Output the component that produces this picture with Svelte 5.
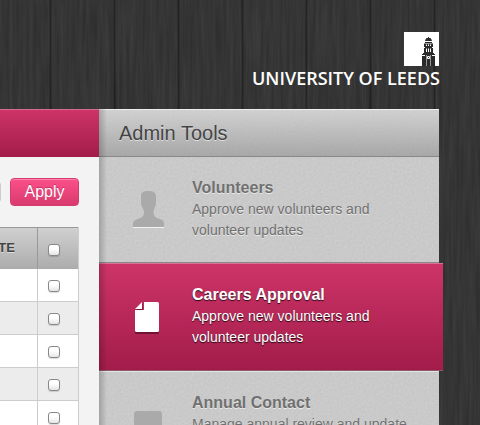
<script>
  const tools = [
    { title: 'Volunteers', lines: ['Approve new volunteers and', 'volunteer updates'], icon: 'person', active: false },
    { title: 'Careers Approval', lines: ['Approve new volunteers and', 'volunteer updates'], icon: 'page', active: true },
    { title: 'Annual Contact', lines: ['Manage annual review and update'], icon: 'card', active: false }
  ];
  const rows = [1, 2, 3, 4, 5];
</script>

<div class="page">
  <header class="masthead">
    <a class="brand" href="#home">
      <svg class="tower" width="35" height="34" viewBox="0 0 35 34" aria-hidden="true">
        <path fill="#fff" d="M0 0h35v34H0z" />
        <g fill="#2b2b2b">
          <path d="M24 5h1v1h1.500l1 1.500.5 1.500h-7l.5-1.500L22.500 6H24z" />
          <path d="M21 10h7v1h-7zM20 11.500h9V15h-9zM21 15h7v1h-7z" />
          <path d="M20 16h9v5h-9z" />
          <path d="M19 21h11v1h1v12h-4V23h-5v11h-4V22h1z" />
          <path d="M22.500 23h4v11h-4z" />
        </g>
        <g fill="#fff">
          <path d="M22 12.500h1V14h-1zM24 12.500h1V14h-1zM26 12.500h1V14h-1z" />
          <path d="M22 16.500h1V20h-1zM24 16.500h1V20h-1zM26 16.500h1V20h-1z" />
          <path d="M18 23h3v1h-3zM28 23h3v1h-3z" />
          <path d="M23.500 24h2l.5.7v1.600l-.5.700h-2l-.5-.7v-1.600z" />
        </g>
        <path fill="#2b2b2b" d="M24 25h1v1h-1z" />
      </svg>
      <span class="wordmark">UNIVERSITY OF LEEDS</span>
    </a>
  </header>

  <div class="body">
    <main class="content">
      <div class="banner"></div>
      <div class="toolbar">
        <select aria-label="Bulk action"><option>Bulk actions</option></select>
        <button type="button">Apply</button>
      </div>
      <div class="records">
        <table>
          <thead>
            <tr>
              <th>DATE</th>
              <th class="tick"><input type="checkbox" aria-label="Select all" /></th>
            </tr>
          </thead>
          <tbody>
            {#each rows as row}
              <tr>
                <td></td>
                <td class="tick"><input type="checkbox" aria-label="Select row {row}" /></td>
              </tr>
            {/each}
          </tbody>
        </table>
      </div>
    </main>

    <aside class="sidebar">
      <h2>Admin Tools</h2>
      <nav>
        {#each tools as tool}
          <a class="tool" class:active={tool.active} href="#tools">
            <svg class="icon" width="32" height="37" viewBox="0 0 32 37" aria-hidden="true">
              {#if tool.icon === 'person'}
                <path fill="#fff" fill-opacity=".75" d="M0 36h31v1H0z" />
                <path fill="#aaa" d="M8 5C8 1 11 0 15.500 0S23 1 23 5v7c0 2-.5 3-1.200 4.500-.8 2-1.300 3-1.300 5 0 3.500 2 5 5.500 6.300 4 1.500 5 2.200 5 5V36H0v-3.200c0-2.800 1.700-3.500 5.500-5 3.500-1.300 5.500-2.800 5.500-6.300 0-2-.8-3-1.500-5C8.500 15 8 14 8 12z" />
              {:else if tool.icon === 'page'}
                <g fill="#701334" transform="translate(2 5)">
                  <path d="M9 0h13.500Q24 0 24 1.500v28q0 1.500-1.500 1.500h-21Q0 31 0 29.500V9h9zM0 8l7.500-7v7z" />
                </g>
                <g fill="#fff" transform="translate(2 4)">
                  <path d="M9 0h13.500Q24 0 24 1.500v27q0 1.500-1.500 1.500h-21Q0 30 0 28.500V8h9zM0 7l7-7v7z" />
                </g>
              {:else}
                <rect x="1" y="5" width="28" height="28" rx="3" fill="#aaa" />
              {/if}
            </svg>
            <span class="text">
              <strong>{tool.title}</strong>
              {#each tool.lines as line}<span>{line}</span>{/each}
            </span>
          </a>
        {/each}
      </nav>
    </aside>
  </div>
</div>

<style>
  :global(html) {
    scrollbar-width: none;
  }
  :global(body) {
    margin: 0;
    background: #333;
  }
  .page {
    min-height: 100vh;
    display: flex;
    flex-direction: column;
    overflow: hidden;
    font-family: "Liberation Sans", Arial, sans-serif;
    background:
      repeating-linear-gradient(to right, transparent 0 49px, rgba(0, 0, 0, .15) 49px 50px, rgba(0, 0, 0, .35) 50px 51px, rgba(0, 0, 0, .15) 51px 52px, transparent 52px 64px),
      url("data:image/svg+xml,%3Csvg xmlns='http://www.w3.org/2000/svg' width='512' height='512'%3E%3Cfilter id='g' x='0' y='0' width='100%25' height='100%25' color-interpolation-filters='sRGB'%3E%3CfeTurbulence type='fractalNoise' baseFrequency='.3 .015' numOctaves='3' seed='4'/%3E%3CfeColorMatrix values='.08 0 0 0 .168 .08 0 0 0 .168 .08 0 0 0 .168 0 0 0 0 1'/%3E%3C/filter%3E%3Crect width='512' height='512' filter='url(%23g)'/%3E%3C/svg%3E"),
      #333;
  }
  .masthead {
    display: flex;
    justify-content: flex-end;
    height: 77px;
    padding: 32px 40px 0 0;
  }
  .brand {
    display: flex;
    flex-direction: column;
    align-items: flex-end;
    color: #fff;
    text-decoration: none;
  }
  .tower {
    display: block;
    margin-right: 1px;
  }
  .wordmark {
    font: 600 18px/24px "Open Sans", Lato, sans-serif;
    white-space: nowrap;
  }
  .body {
    flex: 1;
    display: flex;
    padding-right: 41px;
  }
  .content {
    flex: 1;
    min-width: 0;
    overflow: hidden;
    background: #f3f3f3;
  }
  .banner {
    height: 47px;
    border-top: 1px solid #db6a90;
    background: linear-gradient(#cd3468, #a21c4a);
  }
  .toolbar {
    display: flex;
    justify-content: flex-end;
    align-items: center;
    gap: 9px;
    padding: 21px 20px;
  }
  select {
    flex: none;
    width: 140px;
    height: 22px;
    border: 1px solid #ccc;
    border-radius: 4px;
    background: #e6e6e6;
  }
  button {
    flex: none;
    width: 69px;
    height: 28px;
    padding: 0;
    border: 1px solid #d63c70;
    border-radius: 4px;
    background: linear-gradient(#fb5089, #d93a6f);
    box-shadow: inset 0 1px 0 #ff82ab;
    color: #fff;
    font: 16px/24px "Liberation Sans", Arial, sans-serif;
    text-shadow: 0 -1px 0 rgba(110, 10, 50, .4);
  }
  .records {
    display: flex;
    justify-content: flex-end;
    padding: 0 20px;
  }
  table {
    flex: none;
    width: 240px;
    border-collapse: separate;
    border-spacing: 0;
    table-layout: fixed;
    border-right: 1px solid #ccc;
  }
  th,
  td {
    box-sizing: border-box;
    height: 33px;
    padding: 0;
    border-bottom: 1px solid #ccc;
    background: #fff;
  }
  th {
    height: 42px;
    padding-right: 22px;
    border-top: 1px solid #999;
    border-bottom-color: #aaa;
    background: linear-gradient(#d0d0d0, #adadad);
    color: #444;
    font: 700 13px/18px "Liberation Sans", Arial, sans-serif;
    text-align: right;
    text-shadow: 0 1px 0 rgba(255, 255, 255, .5);
  }
  .tick {
    width: 41px;
    padding: 0 0 0 10px;
    border-left: 1px solid #ccc;
    text-align: left;
  }
  th.tick {
    padding-top: 2px;
    border-left-color: #999;
  }
  tbody tr:nth-child(even) td {
    background: #ececec;
  }
  input {
    appearance: none;
    display: block;
    box-sizing: border-box;
    width: 12px;
    height: 12px;
    margin: 2px 0 0;
    border: 1px solid #888;
    border-radius: 3px;
    background: linear-gradient(#fff 40%, #e4e4e4);
    box-shadow: 0 1px 1px rgba(0, 0, 0, .15);
  }
  .sidebar {
    position: relative;
    flex: none;
    width: 340px;
    background:
      url("data:image/svg+xml,%3Csvg xmlns='http://www.w3.org/2000/svg' width='200' height='200'%3E%3Cfilter id='n' x='0' y='0' width='100%25' height='100%25'%3E%3CfeTurbulence type='fractalNoise' baseFrequency='.45' numOctaves='2' seed='2' stitchTiles='stitch'/%3E%3CfeColorMatrix values='0 0 0 0 .3 0 0 0 0 .3 0 0 0 0 .3 .24 0 0 0 -.04'/%3E%3C/filter%3E%3Crect width='200' height='200' filter='url(%23n)'/%3E%3C/svg%3E"),
      #cecece;
  }
  .sidebar::after {
    content: "";
    position: absolute;
    inset: 0 auto 0 0;
    width: 8px;
    background: linear-gradient(to right, rgba(0, 0, 0, .2), transparent);
    pointer-events: none;
  }
  h2 {
    box-sizing: border-box;
    height: 48px;
    margin: 0;
    padding-left: 20px;
    border-top: 1px solid #eee;
    border-bottom: 1px solid #888;
    background: linear-gradient(rgba(215, 215, 215, .5), rgba(140, 140, 140, .55));
    color: #444;
    font: 400 20px/46px "Liberation Sans", Arial, sans-serif;
    text-shadow: 0 1px 0 rgba(255, 255, 255, .6);
  }
  .tool {
    display: flex;
    gap: 27px;
    box-sizing: border-box;
    height: 108px;
    padding: 20px 0 0 34px;
    border-top: 1px solid #e4e4e4;
    border-bottom: 1px solid #888;
    color: #707070;
    text-decoration: none;
    text-shadow: 0 1px 0 rgba(255, 255, 255, .6);
  }
  .tool:first-child {
    height: 106px;
    border-top: 0;
  }
  .icon {
    flex: none;
    margin-top: 14px;
  }
  .text {
    display: flex;
    flex-direction: column;
    font-size: 14px;
    line-height: 21px;
    white-space: nowrap;
  }
  strong {
    font-size: 16px;
    line-height: 22px;
  }
  .active {
    margin-right: -4px;
    border-top-color: #dc7095;
    border-bottom-color: #8b5a68;
    background: linear-gradient(#cd3468, #a21c4a);
    color: #fff;
    text-shadow: 0 1px 1px rgba(0, 0, 0, .8);
  }
</style>
